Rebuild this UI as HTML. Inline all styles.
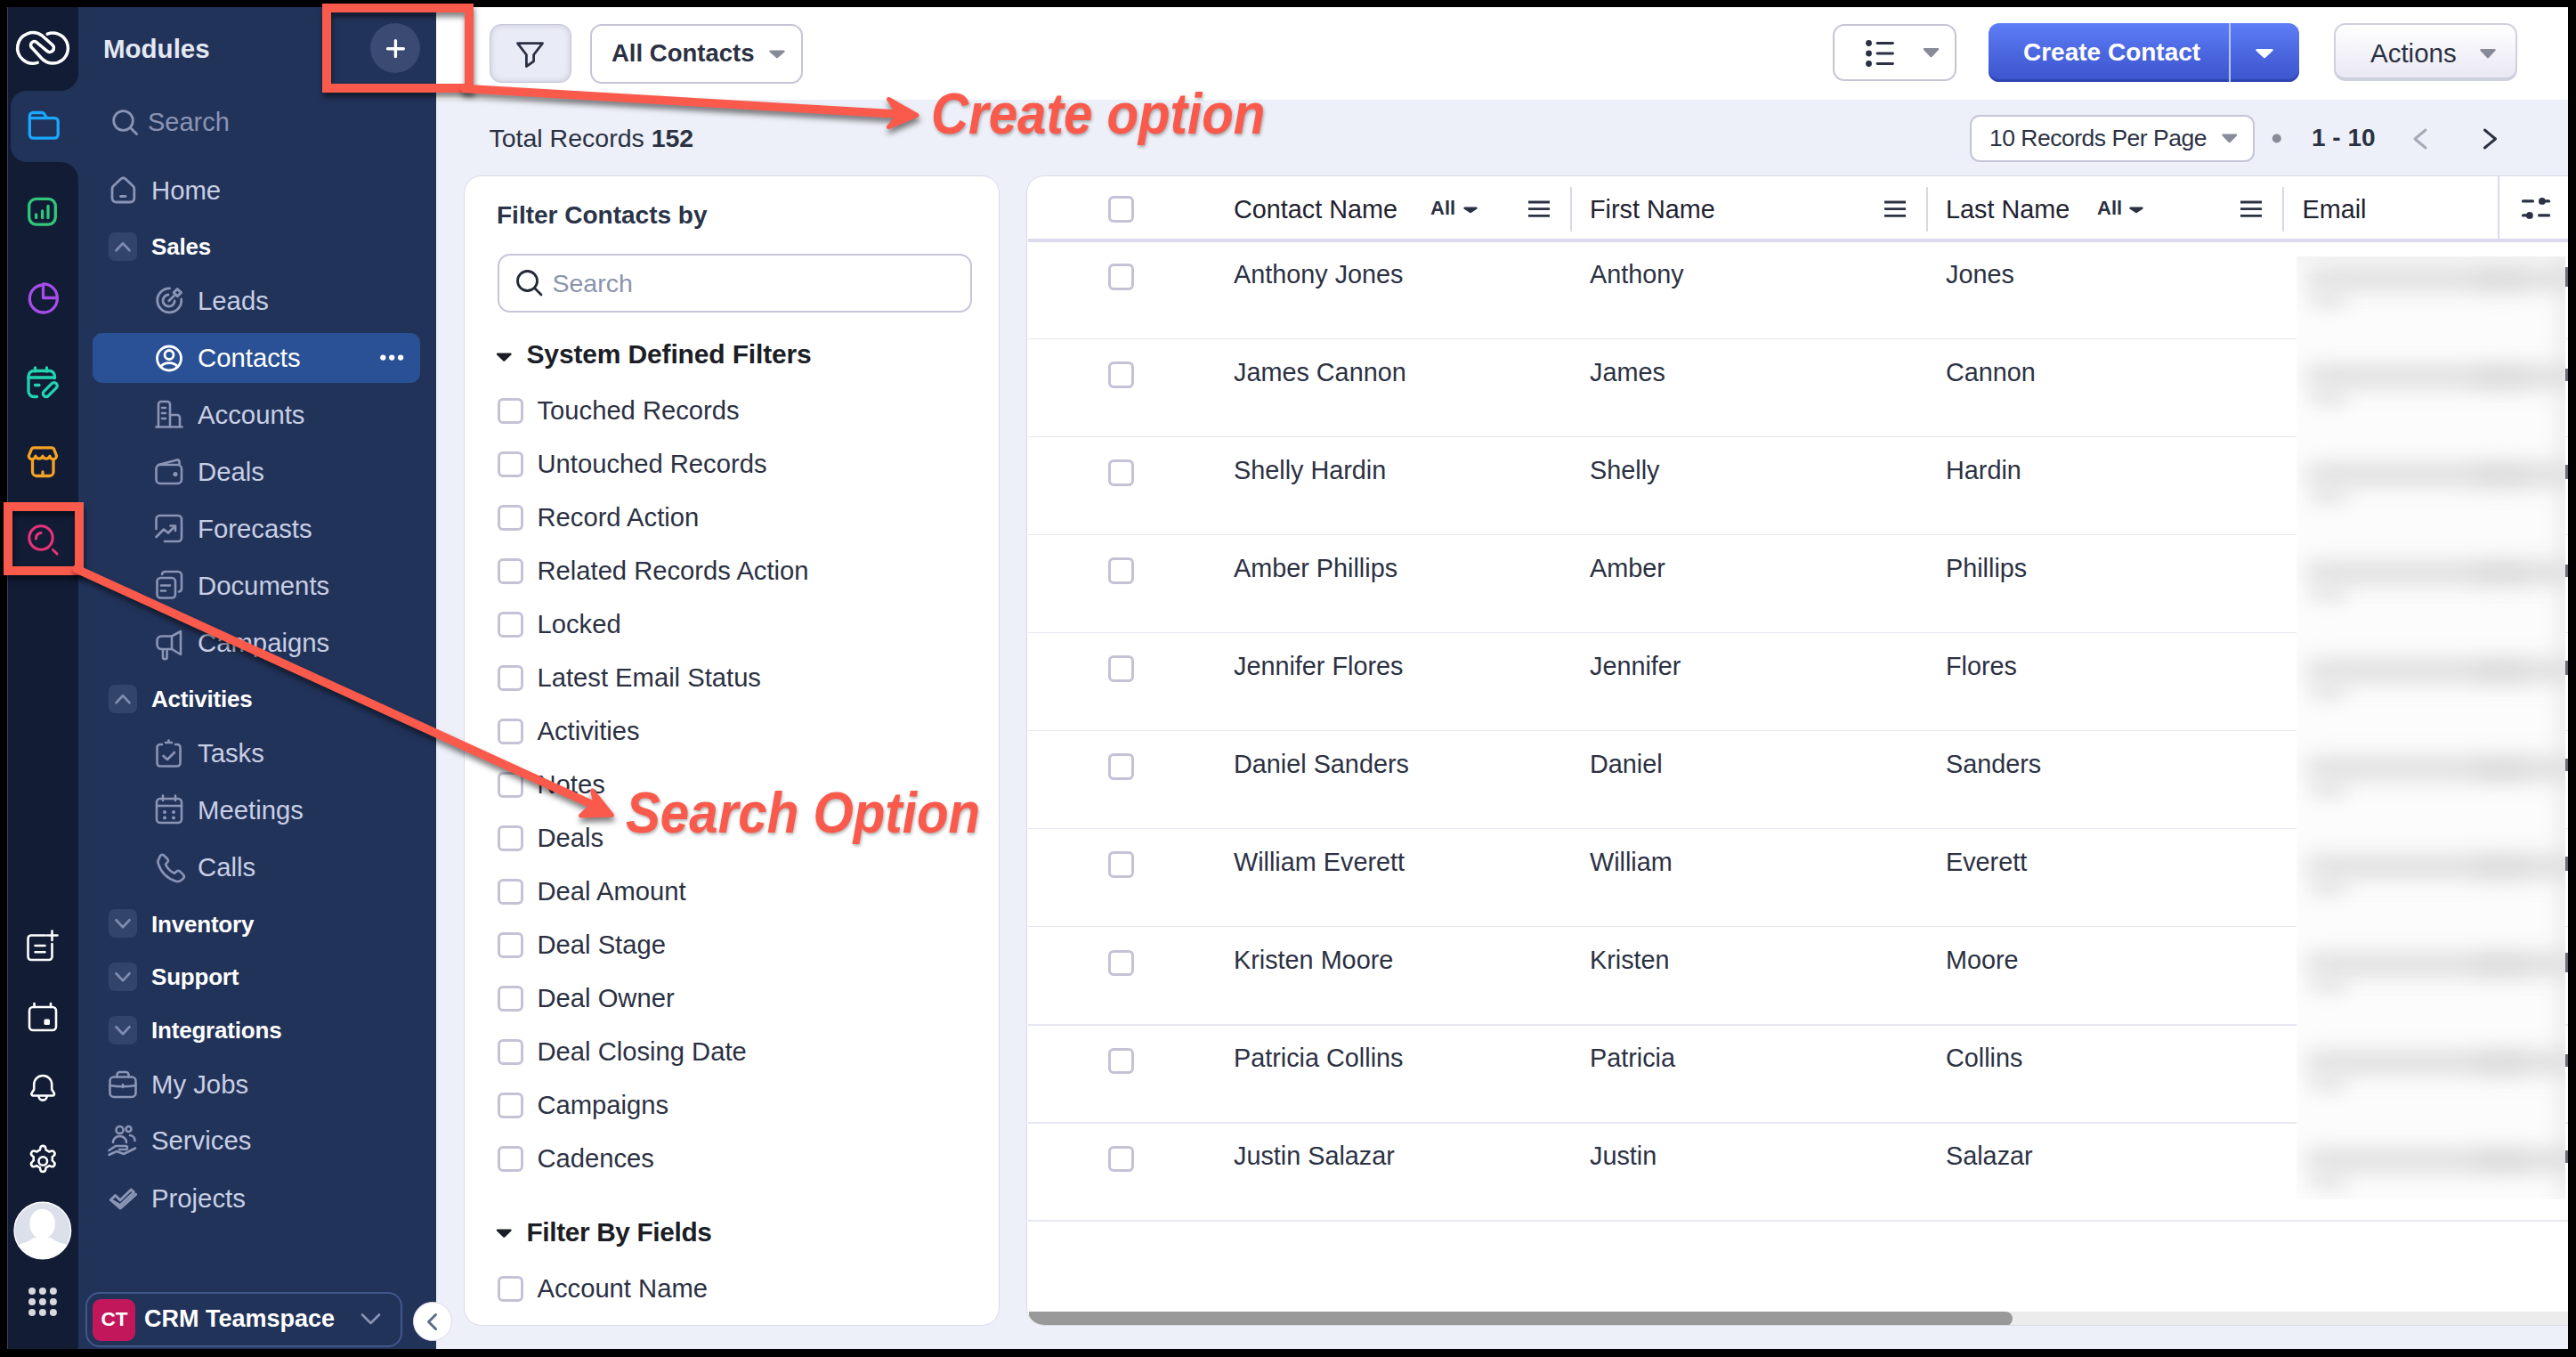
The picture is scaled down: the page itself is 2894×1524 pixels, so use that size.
<!DOCTYPE html>
<html><head><meta charset="utf-8"><style>
html,body{margin:0;padding:0;}
body{width:2894px;height:1524px;position:relative;overflow:hidden;background:#000;font-family:"Liberation Sans", sans-serif;-webkit-font-smoothing:antialiased;}
svg{display:block}
</style></head><body>
<div style="position:absolute;left:0px;top:0px;width:2894px;height:1524px;background:#000"></div>
<div style="position:absolute;left:490px;top:8px;width:2395px;height:1507px;background:#edf0f8"></div>
<div style="position:absolute;left:490px;top:8px;width:2395px;height:104px;background:#ffffff"></div>
<div style="position:absolute;left:8px;top:8px;width:1px;height:1507px;background:#3b4256"></div>
<div style="position:absolute;left:9px;top:8px;width:79px;height:1507px;background:#22335a"></div>
<div style="position:absolute;left:9px;top:8px;width:79px;height:94px;background:#121c35;border-bottom-right-radius:20px"></div>
<div style="position:absolute;left:9px;top:182px;width:79px;height:1333px;background:#121c35;border-top-right-radius:20px"></div>
<div style="position:absolute;left:9px;top:90px;width:30px;height:104px;background:#121c35"></div>
<div style="position:absolute;left:12px;top:102px;width:80px;height:80px;background:#22335a;border-radius:18px 0 0 18px"></div>
<div style="position:absolute;left:88px;top:8px;width:402px;height:1507px;background:#22335a"></div>
<svg style="position:absolute;left:0px;top:0px;overflow:visible;pointer-events:none;" width="2894" height="1524" viewBox="0 0 2894 1524"><path d="M42.2 70.4 A17.3 17.3 0 1 1 47.5 40.2 L59 50.5 A4.6 4.6 0 0 1 53.5 57.8 L40.5 47 A4.1 4.1 0 0 0 36 53.8 L47 65.7 A17 17 0 1 0 53.2 38.2" fill="none" stroke="#fff" stroke-width="3.5" stroke-linecap="round" stroke-linejoin="round"/><g fill="none" stroke="#1aa7ff" stroke-width="3.3" stroke-linecap="round" stroke-linejoin="round"><path d="M33.3 130.2 a3.7 3.7 0 0 1 3.7 -3.7 H47.3 a2.6 2.6 0 0 1 2.1 1.1 L52.8 132.6 H61.3 a3.9 3.9 0 0 1 3.9 3.9 V151.3 a3.9 3.9 0 0 1 -3.9 3.9 H37.2 a3.9 3.9 0 0 1 -3.9 -3.9 Z"/><path d="M34 132.6 H52"/></g><g fill="none" stroke="#30c77a" stroke-width="3.3" stroke-linecap="round"><rect x="32.7" y="223.3" width="29.6" height="28.8" rx="8"/><path d="M40.6 244.5 V241 M47.6 244.5 V237 M54 244.5 V231.5"/></g><g fill="none" stroke="#a64de9" stroke-width="3.3" stroke-linecap="round" stroke-linejoin="round"><path d="M64.3 336 A15.5 15.5 0 1 1 48 320"/><path d="M48.5 318.8 V334.5 H64.3 A15.7 15.7 0 0 0 48.5 318.8 Z"/></g><g fill="none" stroke="#22d3b0" stroke-width="3.3" stroke-linecap="round" stroke-linejoin="round"><path d="M41.5 445.5 H38 a6 6 0 0 1 -6 -6 V422.5 a6 6 0 0 1 6 -6 H55.5 a6 6 0 0 1 6 6 V424.5"/><path d="M32 424 H61.5 M39.5 413 V417 M52.5 413 V417 M39.5 432.5 H44"/><rect x="-9.8" y="-3.5" width="19.6" height="7" rx="3.5" transform="translate(56.3 437.6) rotate(-45)"/></g><g fill="none" stroke="#f6a224" stroke-width="3.3" stroke-linecap="round" stroke-linejoin="round"><path d="M38 502.8 H58 a3 3 0 0 1 2.8 2 L63.5 512 a3.6 3.6 0 0 1 -3.6 3.6 a4 4 0 0 1 -4 -3.3 a4.2 4.2 0 0 1 -8 0 a4.2 4.2 0 0 1 -8 0 a4 4 0 0 1 -4 3.3 a3.6 3.6 0 0 1 -3.6 -3.6 L35.2 504.8 a3 3 0 0 1 2.8 -2 Z"/><path d="M36.5 516.5 V530 a4.5 4.5 0 0 0 4.5 4.5 H55.5 a4.5 4.5 0 0 0 4.5 -4.5 V516.5"/><path d="M48 534 V530"/></g><g fill="none" stroke="#e8327a" stroke-width="3.1" stroke-linecap="round"><circle cx="46" cy="604" r="13.2"/><path d="M40.5 605 A6 6 0 0 1 46 598.5"/><path d="M59.5 617.5 L64 622"/></g><g fill="none" stroke="#ffffff" stroke-width="2.6" stroke-linecap="round" stroke-linejoin="round"><path d="M51 1050.5 H35 a3.5 3.5 0 0 0 -3.5 3.5 V1074.5 a3.5 3.5 0 0 0 3.5 3.5 H55 a3.5 3.5 0 0 0 3.5 -3.5 V1060"/><path d="M39.5 1062 H50.5 M39.5 1069.3 H50.5 M58.5 1045.5 V1056 M53 1050.5 H64.5"/></g><g fill="none" stroke="#ffffff" stroke-width="2.6" stroke-linecap="round" stroke-linejoin="round"><rect x="33" y="1131" width="30" height="26" rx="4"/><path d="M38.5 1127 V1131 M57 1127 V1131"/></g><rect x="49.5" y="1144.5" width="6.5" height="6.5" rx="1.5" fill="#fff"/><g fill="none" stroke="#ffffff" stroke-width="2.6" stroke-linecap="round" stroke-linejoin="round"><path d="M36.9 1230.5 H59.5 a2 2 0 0 0 1 -3.3 L58.2 1223.5 V1218 a10 10 0 0 0 -20 0 V1223.5 L35.9 1227.2 a2 2 0 0 0 1 3.3 Z"/><path d="M43.5 1231 a4.6 4.6 0 0 0 9.2 0"/></g><g fill="none" stroke="#ffffff" stroke-width="2.6" stroke-linecap="round" stroke-linejoin="round"><path d="M45.3 1289.3 a3 3 0 0 1 5.9 0 l0.5 2.2 a12 12 0 0 1 3.5 2 l2.2 -0.7 a3 3 0 0 1 3 5.1 l-1.7 1.5 a12 12 0 0 1 0 4 l1.7 1.5 a3 3 0 0 1 -3 5.1 l-2.2 -0.7 a12 12 0 0 1 -3.5 2 l-0.5 2.2 a3 3 0 0 1 -5.9 0 l-0.5 -2.2 a12 12 0 0 1 -3.5 -2 l-2.2 0.7 a3 3 0 0 1 -3 -5.1 l1.7 -1.5 a12 12 0 0 1 0 -4 l-1.7 -1.5 a3 3 0 0 1 3 -5.1 l2.2 0.7 a12 12 0 0 1 3.5 -2 Z"/><circle cx="48.25" cy="1304" r="4.8"/></g><defs><clipPath id="avc"><circle cx="47.8" cy="1382" r="31.5"/></clipPath></defs><circle cx="47.8" cy="1382" r="31.8" fill="#dce0ea" stroke="#ffffff" stroke-width="1.4"/><g clip-path="url(#avc)" fill="#fff"><ellipse cx="47.6" cy="1374.5" rx="14.3" ry="16.8"/><path d="M14 1401 C22 1396 32 1396 38 1390 L57 1390 C63 1396 73 1396 82 1401 V1420 H14 Z"/></g><circle cx="36" cy="1450" r="4" fill="#d6d8de"/><circle cx="47.9" cy="1450" r="4" fill="#d6d8de"/><circle cx="59.9" cy="1450" r="4" fill="#d6d8de"/><circle cx="36" cy="1461.9" r="4" fill="#d6d8de"/><circle cx="47.9" cy="1461.9" r="4" fill="#d6d8de"/><circle cx="59.9" cy="1461.9" r="4" fill="#d6d8de"/><circle cx="36" cy="1473.9" r="4" fill="#d6d8de"/><circle cx="47.9" cy="1473.9" r="4" fill="#d6d8de"/><circle cx="59.9" cy="1473.9" r="4" fill="#d6d8de"/></svg>
<div style="position:absolute;left:116px;top:39.83px;font-size:29.5px;line-height:29.5px;font-weight:700;color:#e4e8f3;white-space:nowrap;">Modules</div>
<div style="position:absolute;left:416px;top:26px;width:56px;height:56px;background:#3a4a72;border-radius:50%"></div>
<svg style="position:absolute;left:0px;top:0px;overflow:visible;pointer-events:none;" width="2894" height="1524" viewBox="0 0 2894 1524"><path d="M444.4 45.8 V63.6 M435.5 54.7 H453.3" stroke="#fff" stroke-width="3.4" stroke-linecap="round"/></svg>
<svg style="position:absolute;left:0px;top:0px;overflow:visible;pointer-events:none;" width="2894" height="1524" viewBox="0 0 2894 1524"><g fill="none" stroke="#8a95b5" stroke-width="2.8" stroke-linecap="round"><circle cx="138.5" cy="135.5" r="10.8"/><path d="M146.5 143.5 L153.5 150.5"/></g></svg>
<div style="position:absolute;left:166px;top:122.95px;font-size:29px;line-height:29px;font-weight:400;color:#8a94b4;white-space:nowrap;">Search</div>
<svg style="position:absolute;left:0px;top:0px;overflow:visible;pointer-events:none;" width="2894" height="1524" viewBox="0 0 2894 1524"><g fill="none" stroke="#8a95b5" stroke-width="2.8" stroke-linecap="round" stroke-linejoin="round"><path d="M126 212 a4 4 0 0 1 1.3 -3 L136 200.8 a3.5 3.5 0 0 1 4.8 0 L149.5 209 a4 4 0 0 1 1.3 3 V222.5 a4.5 4.5 0 0 1 -4.5 4.5 H130.5 a4.5 4.5 0 0 1 -4.5 -4.5 Z"/><path d="M135.5 220.5 H141"/></g></svg>
<div style="position:absolute;left:170px;top:199.20px;font-size:29.3px;line-height:29.3px;font-weight:400;color:#c8cfe4;white-space:nowrap;">Home</div>
<div style="position:absolute;left:122px;top:261px;width:32px;height:31.5px;background:#33446b;border-radius:7px"></div>
<svg style="position:absolute;left:0px;top:0px;overflow:visible;pointer-events:none;" width="2894" height="1524" viewBox="0 0 2894 1524"><path d="M130.5 281.25 L138 273.25 L145.5 281.25" fill="none" stroke="#7f8cae" stroke-width="2.6" stroke-linecap="round" stroke-linejoin="round"/></svg>
<div style="position:absolute;left:170px;top:263.99px;font-size:26px;line-height:26px;font-weight:700;color:#ffffff;white-space:nowrap;letter-spacing:-0.2px;">Sales</div>
<svg style="position:absolute;left:0px;top:0px;overflow:visible;pointer-events:none;" width="2894" height="1524" viewBox="0 0 2894 1524"><g fill="none" stroke="#8a95b5" stroke-width="2.8" stroke-linecap="round" stroke-linejoin="round"><path d="M203.7 336 A13.5 13.5 0 1 1 190.6 323.9"/><path d="M196.2 338 A6.6 6.6 0 1 1 189 331"/><path d="M189.8 337.8 L195.5 332.3"/><path d="M195.2 328.6 L199.3 324.5 L203.4 328.6 L199.3 332.7 Z" stroke-width="3"/></g></svg>
<div style="position:absolute;left:222px;top:323.20px;font-size:29.3px;line-height:29.3px;font-weight:400;color:#c8cfe4;white-space:nowrap;">Leads</div>
<div style="position:absolute;left:104px;top:374px;width:368px;height:56px;background:#2a5196;border-radius:11px"></div>
<svg style="position:absolute;left:0px;top:0px;overflow:visible;pointer-events:none;" width="2894" height="1524" viewBox="0 0 2894 1524"><g fill="none" stroke="#fff" stroke-width="2.8" stroke-linecap="round"><circle cx="190" cy="402.5" r="13.5"/><circle cx="190" cy="398.5" r="5"/><path d="M180.5 412 a10.5 7.5 0 0 1 19 0"/></g></svg>
<div style="position:absolute;left:222px;top:387.20px;font-size:29.3px;line-height:29.3px;font-weight:400;color:#ffffff;white-space:nowrap;">Contacts</div>
<svg style="position:absolute;left:0px;top:0px;overflow:visible;pointer-events:none;" width="2894" height="1524" viewBox="0 0 2894 1524"><g fill="#fff"><circle cx="430.3" cy="401.6" r="3.15"/><circle cx="440.2" cy="401.6" r="3.15"/><circle cx="450.1" cy="401.6" r="3.15"/></g></svg>
<svg style="position:absolute;left:0px;top:0px;overflow:visible;pointer-events:none;" width="2894" height="1524" viewBox="0 0 2894 1524"><g fill="none" stroke="#8a95b5" stroke-width="2.6" stroke-linecap="round" stroke-linejoin="round"><path d="M175.5 479.5 H204.5"/><path d="M178 479 V454 a3 3 0 0 1 3 -3 H188 a3 3 0 0 1 3 3 V479"/><path d="M191 466 H199 a3 3 0 0 1 3 3 V479"/><path d="M182 458 H186 M182 464 H186 M182 470 H186"/></g></svg>
<div style="position:absolute;left:222px;top:451.20px;font-size:29.3px;line-height:29.3px;font-weight:400;color:#c8cfe4;white-space:nowrap;">Accounts</div>
<svg style="position:absolute;left:0px;top:0px;overflow:visible;pointer-events:none;" width="2894" height="1524" viewBox="0 0 2894 1524"><g fill="none" stroke="#8a95b5" stroke-width="2.6" stroke-linecap="round" stroke-linejoin="round"><rect x="175.5" y="522" width="28.5" height="21" rx="4.5"/><path d="M178 522 L199 516.5 a2 2 0 0 1 2.5 2 V522"/><circle cx="197" cy="532.5" r="1.3" fill="#8a95b5"/></g></svg>
<div style="position:absolute;left:222px;top:515.20px;font-size:29.3px;line-height:29.3px;font-weight:400;color:#c8cfe4;white-space:nowrap;">Deals</div>
<svg style="position:absolute;left:0px;top:0px;overflow:visible;pointer-events:none;" width="2894" height="1524" viewBox="0 0 2894 1524"><g fill="none" stroke="#8a95b5" stroke-width="2.6" stroke-linecap="round" stroke-linejoin="round"><path d="M175.5 594 V583 a4 4 0 0 1 4 -4 H200 a4 4 0 0 1 4 4 V604 a4 4 0 0 1 -4 4 H185"/><path d="M175.5 603 L184 594.5 L189 598.5 L196.5 591 M191.5 590.5 H197 V596"/></g></svg>
<div style="position:absolute;left:222px;top:579.20px;font-size:29.3px;line-height:29.3px;font-weight:400;color:#c8cfe4;white-space:nowrap;">Forecasts</div>
<svg style="position:absolute;left:0px;top:0px;overflow:visible;pointer-events:none;" width="2894" height="1524" viewBox="0 0 2894 1524"><g fill="none" stroke="#8a95b5" stroke-width="2.6" stroke-linecap="round" stroke-linejoin="round"><rect x="176.5" y="649" width="20.5" height="22.5" rx="4"/><path d="M182 645 a3.5 3.5 0 0 1 3.5 -3 H200 a4 4 0 0 1 4 4 V661 a3.5 3.5 0 0 1 -3 3.5"/><path d="M181 657.5 H191 M181 663.5 H186"/></g></svg>
<div style="position:absolute;left:222px;top:643.20px;font-size:29.3px;line-height:29.3px;font-weight:400;color:#c8cfe4;white-space:nowrap;">Documents</div>
<svg style="position:absolute;left:0px;top:0px;overflow:visible;pointer-events:none;" width="2894" height="1524" viewBox="0 0 2894 1524"><g fill="none" stroke="#8a95b5" stroke-width="2.6" stroke-linecap="round" stroke-linejoin="round"><path d="M203 709 V735 L193 729 H181.5 a5 5 0 0 1 -5 -5 V719.5 a5 5 0 0 1 5 -5 H193 Z"/><path d="M183 729.5 V738 a2.3 2.3 0 0 0 4.6 0 V729.5 M193 714.5 V729"/></g></svg>
<div style="position:absolute;left:222px;top:707.20px;font-size:29.3px;line-height:29.3px;font-weight:400;color:#c8cfe4;white-space:nowrap;">Campaigns</div>
<div style="position:absolute;left:122px;top:769px;width:32px;height:31.5px;background:#33446b;border-radius:7px"></div>
<svg style="position:absolute;left:0px;top:0px;overflow:visible;pointer-events:none;" width="2894" height="1524" viewBox="0 0 2894 1524"><path d="M130.5 789.25 L138 781.25 L145.5 789.25" fill="none" stroke="#7f8cae" stroke-width="2.6" stroke-linecap="round" stroke-linejoin="round"/></svg>
<div style="position:absolute;left:170px;top:771.99px;font-size:26px;line-height:26px;font-weight:700;color:#ffffff;white-space:nowrap;letter-spacing:-0.2px;">Activities</div>
<svg style="position:absolute;left:0px;top:0px;overflow:visible;pointer-events:none;" width="2894" height="1524" viewBox="0 0 2894 1524"><g fill="none" stroke="#8a95b5" stroke-width="2.6" stroke-linecap="round" stroke-linejoin="round"><path d="M182 836 H180 a3.5 3.5 0 0 0 -3.5 3.5 V857 a3.5 3.5 0 0 0 3.5 3.5 H199 a3.5 3.5 0 0 0 3.5 -3.5 V839.5 a3.5 3.5 0 0 0 -3.5 -3.5 H197"/><path d="M186 834 H193 M189.5 831.5 V834"/><path d="M183.5 849 L188 853 L196 845"/></g></svg>
<div style="position:absolute;left:222px;top:831.20px;font-size:29.3px;line-height:29.3px;font-weight:400;color:#c8cfe4;white-space:nowrap;">Tasks</div>
<svg style="position:absolute;left:0px;top:0px;overflow:visible;pointer-events:none;" width="2894" height="1524" viewBox="0 0 2894 1524"><g fill="none" stroke="#8a95b5" stroke-width="2.6" stroke-linecap="round" stroke-linejoin="round"><rect x="176" y="897" width="28" height="27" rx="4"/><path d="M176 905 H204 M183 893.5 V899 M197 893.5 V899"/></g><g fill="#8a95b5"><circle cx="185" cy="912" r="2"/><circle cx="195" cy="912" r="2"/><circle cx="185" cy="918.5" r="2"/><circle cx="195" cy="918.5" r="2"/></g></svg>
<div style="position:absolute;left:222px;top:895.20px;font-size:29.3px;line-height:29.3px;font-weight:400;color:#c8cfe4;white-space:nowrap;">Meetings</div>
<svg style="position:absolute;left:0px;top:0px;overflow:visible;pointer-events:none;" width="2894" height="1524" viewBox="0 0 2894 1524"><path d="M180 961 a3 3 0 0 1 4 -0.5 l4 4 a3 3 0 0 1 0 4 l-2 2.2 a20 20 0 0 0 10 10 l2.2 -2 a3 3 0 0 1 4 0 l4 4 a3 3 0 0 1 -0.5 4 l-2.5 2 a6 6 0 0 1 -5.5 1 a30 30 0 0 1 -20 -20 a6 6 0 0 1 1 -5.5 Z" fill="none" stroke="#8a95b5" stroke-width="2.6" stroke-linejoin="round"/></svg>
<div style="position:absolute;left:222px;top:959.20px;font-size:29.3px;line-height:29.3px;font-weight:400;color:#c8cfe4;white-space:nowrap;">Calls</div>
<div style="position:absolute;left:122px;top:1021px;width:32px;height:31.5px;background:#33446b;border-radius:7px"></div>
<svg style="position:absolute;left:0px;top:0px;overflow:visible;pointer-events:none;" width="2894" height="1524" viewBox="0 0 2894 1524"><path d="M130.5 1033.25 L138 1041.25 L145.5 1033.25" fill="none" stroke="#7f8cae" stroke-width="2.6" stroke-linecap="round" stroke-linejoin="round"/></svg>
<div style="position:absolute;left:170px;top:1024.59px;font-size:26px;line-height:26px;font-weight:700;color:#ffffff;white-space:nowrap;letter-spacing:-0.2px;">Inventory</div>
<div style="position:absolute;left:122px;top:1081px;width:32px;height:31.5px;background:#33446b;border-radius:7px"></div>
<svg style="position:absolute;left:0px;top:0px;overflow:visible;pointer-events:none;" width="2894" height="1524" viewBox="0 0 2894 1524"><path d="M130.5 1093.25 L138 1101.25 L145.5 1093.25" fill="none" stroke="#7f8cae" stroke-width="2.6" stroke-linecap="round" stroke-linejoin="round"/></svg>
<div style="position:absolute;left:170px;top:1083.59px;font-size:26px;line-height:26px;font-weight:700;color:#ffffff;white-space:nowrap;letter-spacing:-0.2px;">Support</div>
<div style="position:absolute;left:122px;top:1141px;width:32px;height:31.5px;background:#33446b;border-radius:7px"></div>
<svg style="position:absolute;left:0px;top:0px;overflow:visible;pointer-events:none;" width="2894" height="1524" viewBox="0 0 2894 1524"><path d="M130.5 1153.25 L138 1161.25 L145.5 1153.25" fill="none" stroke="#7f8cae" stroke-width="2.6" stroke-linecap="round" stroke-linejoin="round"/></svg>
<div style="position:absolute;left:170px;top:1143.99px;font-size:26px;line-height:26px;font-weight:700;color:#ffffff;white-space:nowrap;letter-spacing:-0.2px;">Integrations</div>
<svg style="position:absolute;left:0px;top:0px;overflow:visible;pointer-events:none;" width="2894" height="1524" viewBox="0 0 2894 1524"><g fill="none" stroke="#8a95b5" stroke-width="2.6" stroke-linecap="round" stroke-linejoin="round"><rect x="123.5" y="1209.5" width="29" height="22.5" rx="4.5"/><path d="M131.5 1209.5 V1207 a3 3 0 0 1 3 -3 H141.5 a3 3 0 0 1 3 3 V1209.5 M123.5 1219 a40 18 0 0 0 29 0 M138 1218 V1221"/></g></svg>
<div style="position:absolute;left:170px;top:1203.20px;font-size:29.3px;line-height:29.3px;font-weight:400;color:#c8cfe4;white-space:nowrap;">My Jobs</div>
<svg style="position:absolute;left:0px;top:0px;overflow:visible;pointer-events:none;" width="2894" height="1524" viewBox="0 0 2894 1524"><g fill="none" stroke="#8a95b5" stroke-width="2.6" stroke-linecap="round" stroke-linejoin="round"><circle cx="134.5" cy="1269" r="4"/><path d="M127 1283 a7.5 7 0 0 1 15 0"/><circle cx="144.5" cy="1268" r="3"/><path d="M146 1275 a6 6 0 0 1 5.5 6"/><path d="M122.5 1292 L130 1287 H141 a2 2 0 0 1 0 4 H134 M122.5 1297 L131 1293 L139 1296 L152 1289.5"/></g></svg>
<div style="position:absolute;left:170px;top:1266.20px;font-size:29.3px;line-height:29.3px;font-weight:400;color:#c8cfe4;white-space:nowrap;">Services</div>
<svg style="position:absolute;left:0px;top:0px;overflow:visible;pointer-events:none;" width="2894" height="1524" viewBox="0 0 2894 1524"><g fill="none" stroke="#8a95b5" stroke-width="3" stroke-linecap="round" stroke-linejoin="round"><path d="M124.5 1347.5 L129.5 1342.5 L135 1347.8 L147.3 1336 L150.4 1339.1 L135 1353.6 Z"/><path d="M124.5 1347.5 L135.3 1357 L152.6 1341.3"/></g></svg>
<div style="position:absolute;left:170px;top:1330.80px;font-size:29.3px;line-height:29.3px;font-weight:400;color:#c8cfe4;white-space:nowrap;">Projects</div>
<div style="position:absolute;left:96px;top:1450.5px;width:355.5px;height:62.5px;box-sizing:border-box;border:2px solid #41588d;border-radius:16px"></div>
<div style="position:absolute;left:104px;top:1458.5px;width:48px;height:47px;background:#c2185b;border-radius:9px"></div>
<div style="position:absolute;left:113.5px;top:1470.95px;font-size:22.5px;line-height:22.5px;font-weight:700;color:#ffffff;white-space:nowrap;">CT</div>
<div style="position:absolute;left:162px;top:1468.14px;font-size:27px;line-height:27px;font-weight:700;color:#ffffff;white-space:nowrap;">CRM Teamspace</div>
<svg style="position:absolute;left:0px;top:0px;overflow:visible;pointer-events:none;" width="2894" height="1524" viewBox="0 0 2894 1524"><path d="M407 1476.5 L416.5 1486 L426 1476.5" fill="none" stroke="#8a95b5" stroke-width="2.6" stroke-linecap="round" stroke-linejoin="round"/></svg>
<div style="position:absolute;left:464px;top:1462px;width:43.5px;height:43.5px;box-sizing:border-box;background:#fff;border:1.6px solid #dcd8ec;border-radius:50%"></div>
<svg style="position:absolute;left:0px;top:0px;overflow:visible;pointer-events:none;" width="2894" height="1524" viewBox="0 0 2894 1524"><path d="M489.5 1476.5 L481.5 1484.5 L489.5 1492.5" fill="none" stroke="#5d6a8b" stroke-width="3" stroke-linecap="round" stroke-linejoin="round"/></svg>
<div style="position:absolute;left:550px;top:27px;width:91.5px;height:65.5px;box-sizing:border-box;background:#e9ebf6;border:1.6px solid #c6c6d8;border-radius:13px;box-shadow:inset 0 0 6px rgba(120,120,150,0.35)"></div>
<svg style="position:absolute;left:0px;top:0px;overflow:visible;pointer-events:none;" width="2894" height="1524" viewBox="0 0 2894 1524"><path d="M581.5 48.6 H609.5 L599.6 61.5 V68.8 L591.4 74.5 V61.5 Z" fill="none" stroke="#2b3142" stroke-width="2.8" stroke-linejoin="round"/></svg>
<div style="position:absolute;left:662.5px;top:26.5px;width:239px;height:67px;box-sizing:border-box;background:#fff;border:2px solid #c6c5d8;border-radius:13px"></div>
<div style="position:absolute;left:687px;top:46.12px;font-size:27.5px;line-height:27.5px;font-weight:700;color:#2b3142;white-space:nowrap;">All Contacts</div>
<svg style="position:absolute;left:0px;top:0px;overflow:visible;pointer-events:none;" width="2894" height="1524" viewBox="0 0 2894 1524"><path d="M865.50 57.70 L880.50 57.70 L873.00 64.10 Z" fill="#878b98" stroke="#878b98" stroke-width="2.4" stroke-linejoin="round"/></svg>
<div style="position:absolute;left:2059px;top:26.5px;width:138.5px;height:64.5px;box-sizing:border-box;background:#fff;border:2px solid #c6c5d8;border-radius:13px"></div>
<svg style="position:absolute;left:0px;top:0px;overflow:visible;pointer-events:none;" width="2894" height="1524" viewBox="0 0 2894 1524"><g fill="#2b3142"><circle cx="2099.5" cy="48.5" r="3.4"/><circle cx="2099.5" cy="60" r="3.4"/><circle cx="2099.5" cy="71.5" r="3.4"/></g><path d="M2109 48.5 H2126.5 M2109 60 H2126.5 M2109 71.5 H2126.5" stroke="#2b3142" stroke-width="2.8" stroke-linecap="round"/></svg>
<svg style="position:absolute;left:0px;top:0px;overflow:visible;pointer-events:none;" width="2894" height="1524" viewBox="0 0 2894 1524"><path d="M2162.00 55.20 L2177.00 55.20 L2169.50 63.10 Z" fill="#878b98" stroke="#878b98" stroke-width="2.4" stroke-linejoin="round"/></svg>
<div style="position:absolute;left:2234px;top:26px;width:348.5px;height:66px;background:linear-gradient(#5d7ef7,#4863dc 60%,#3d55cc);border-radius:12px;box-shadow:inset 0 -3px 0 #2f45b3"></div>
<div style="position:absolute;left:2503.5px;top:26px;width:2px;height:66px;background:#b9c6f8"></div>
<div style="position:absolute;left:2273px;top:45.30px;font-size:28px;line-height:28px;font-weight:700;color:#ffffff;white-space:nowrap;">Create Contact</div>
<svg style="position:absolute;left:0px;top:0px;overflow:visible;pointer-events:none;" width="2894" height="1524" viewBox="0 0 2894 1524"><path d="M2535.50 56.20 L2552.50 56.20 L2544.00 64.10 Z" fill="#ffffff" stroke="#ffffff" stroke-width="2.4" stroke-linejoin="round"/></svg>
<div style="position:absolute;left:2621.5px;top:25.5px;width:206px;height:65.5px;box-sizing:border-box;background:linear-gradient(#ffffff,#eae8f4);border:2px solid #cfd0de;border-bottom:4px solid #cdd1de;border-radius:13px"></div>
<div style="position:absolute;left:2663px;top:44.63px;font-size:29.5px;line-height:29.5px;font-weight:400;color:#2b3142;white-space:nowrap;">Actions</div>
<svg style="position:absolute;left:0px;top:0px;overflow:visible;pointer-events:none;" width="2894" height="1524" viewBox="0 0 2894 1524"><path d="M2787.50 56.20 L2802.50 56.20 L2795.00 64.10 Z" fill="#878b98" stroke="#878b98" stroke-width="2.4" stroke-linejoin="round"/></svg>
<div style="position:absolute;left:549.5px;top:140.87px;font-size:28.5px;line-height:28.5px;font-weight:400;color:#2b3142;white-space:nowrap;">Total Records <b>152</b></div>
<div style="position:absolute;left:2212.5px;top:128.5px;width:320px;height:53px;box-sizing:border-box;background:#fff;border:2px solid #c6c5d8;border-radius:11px"></div>
<div style="position:absolute;left:2235px;top:141.57px;font-size:26.5px;line-height:26.5px;font-weight:400;color:#2b3142;white-space:nowrap;letter-spacing:-0.5px;">10 Records Per Page</div>
<svg style="position:absolute;left:0px;top:0px;overflow:visible;pointer-events:none;" width="2894" height="1524" viewBox="0 0 2894 1524"><path d="M2497.50 151.70 L2512.00 151.70 L2504.75 159.10 Z" fill="#878b98" stroke="#878b98" stroke-width="2.4" stroke-linejoin="round"/></svg>
<svg style="position:absolute;left:0px;top:0px;overflow:visible;pointer-events:none;" width="2894" height="1524" viewBox="0 0 2894 1524"><circle cx="2557.8" cy="155.5" r="5" fill="#878b98"/></svg>
<div style="position:absolute;left:2597px;top:141.10px;font-size:28px;line-height:28px;font-weight:700;color:#2b3142;white-space:nowrap;">1 - 10</div>
<svg style="position:absolute;left:0px;top:0px;overflow:visible;pointer-events:none;" width="2894" height="1524" viewBox="0 0 2894 1524"><path d="M2725 146 L2713 156 L2725 166" fill="none" stroke="#a6aab8" stroke-width="3" stroke-linecap="round" stroke-linejoin="round"/><path d="M2791.5 146 L2803.5 156 L2791.5 166" fill="none" stroke="#2b3142" stroke-width="3" stroke-linecap="round" stroke-linejoin="round"/></svg>
<div style="position:absolute;left:521px;top:197px;width:602px;height:1292px;box-sizing:border-box;background:#fff;border:1.6px solid #dcd9ec;border-radius:20px"></div>
<div style="position:absolute;left:558px;top:228.30px;font-size:28px;line-height:28px;font-weight:700;color:#2a3347;white-space:nowrap;">Filter Contacts by</div>
<div style="position:absolute;left:558.5px;top:284.5px;width:533px;height:66.5px;box-sizing:border-box;background:#fff;border:2px solid #c7c5d8;border-radius:14px"></div>
<svg style="position:absolute;left:0px;top:0px;overflow:visible;pointer-events:none;" width="2894" height="1524" viewBox="0 0 2894 1524"><g fill="none" stroke="#232838" stroke-width="2.8" stroke-linecap="round"><circle cx="592.5" cy="315.5" r="11"/><path d="M600.5 323.5 L608 331"/></g></svg>
<div style="position:absolute;left:620.5px;top:304.07px;font-size:28.5px;line-height:28.5px;font-weight:400;color:#8b93ad;white-space:nowrap;">Search</div>
<svg style="position:absolute;left:0px;top:0px;overflow:visible;pointer-events:none;" width="2894" height="1524" viewBox="0 0 2894 1524"><path d="M559.00 397.70 L573.50 397.70 L566.25 404.60 Z" fill="#1c1e26" stroke="#1c1e26" stroke-width="2.4" stroke-linejoin="round"/></svg>
<div style="position:absolute;left:591.5px;top:382.91px;font-size:30px;line-height:30px;font-weight:700;color:#1c1e26;white-space:nowrap;letter-spacing:-0.15px;">System Defined Filters</div>
<div style="position:absolute;left:558.5px;top:446.5px;width:29.5px;height:29.5px;box-sizing:border-box;border:3px solid #c4c2d5;border-radius:6px;background:#fff"></div>
<div style="position:absolute;left:603.5px;top:446.58px;font-size:29.2px;line-height:29.2px;font-weight:400;color:#2b3142;white-space:nowrap;">Touched Records</div>
<div style="position:absolute;left:558.5px;top:506.52000000000004px;width:29.5px;height:29.5px;box-sizing:border-box;border:3px solid #c4c2d5;border-radius:6px;background:#fff"></div>
<div style="position:absolute;left:603.5px;top:506.60px;font-size:29.2px;line-height:29.2px;font-weight:400;color:#2b3142;white-space:nowrap;">Untouched Records</div>
<div style="position:absolute;left:558.5px;top:566.5400000000001px;width:29.5px;height:29.5px;box-sizing:border-box;border:3px solid #c4c2d5;border-radius:6px;background:#fff"></div>
<div style="position:absolute;left:603.5px;top:566.62px;font-size:29.2px;line-height:29.2px;font-weight:400;color:#2b3142;white-space:nowrap;">Record Action</div>
<div style="position:absolute;left:558.5px;top:626.5600000000001px;width:29.5px;height:29.5px;box-sizing:border-box;border:3px solid #c4c2d5;border-radius:6px;background:#fff"></div>
<div style="position:absolute;left:603.5px;top:626.64px;font-size:29.2px;line-height:29.2px;font-weight:400;color:#2b3142;white-space:nowrap;">Related Records Action</div>
<div style="position:absolute;left:558.5px;top:686.58px;width:29.5px;height:29.5px;box-sizing:border-box;border:3px solid #c4c2d5;border-radius:6px;background:#fff"></div>
<div style="position:absolute;left:603.5px;top:686.66px;font-size:29.2px;line-height:29.2px;font-weight:400;color:#2b3142;white-space:nowrap;">Locked</div>
<div style="position:absolute;left:558.5px;top:746.6000000000001px;width:29.5px;height:29.5px;box-sizing:border-box;border:3px solid #c4c2d5;border-radius:6px;background:#fff"></div>
<div style="position:absolute;left:603.5px;top:746.68px;font-size:29.2px;line-height:29.2px;font-weight:400;color:#2b3142;white-space:nowrap;">Latest Email Status</div>
<div style="position:absolute;left:558.5px;top:806.6200000000001px;width:29.5px;height:29.5px;box-sizing:border-box;border:3px solid #c4c2d5;border-radius:6px;background:#fff"></div>
<div style="position:absolute;left:603.5px;top:806.70px;font-size:29.2px;line-height:29.2px;font-weight:400;color:#2b3142;white-space:nowrap;">Activities</div>
<div style="position:absolute;left:558.5px;top:866.6400000000001px;width:29.5px;height:29.5px;box-sizing:border-box;border:3px solid #c4c2d5;border-radius:6px;background:#fff"></div>
<div style="position:absolute;left:603.5px;top:866.72px;font-size:29.2px;line-height:29.2px;font-weight:400;color:#2b3142;white-space:nowrap;">Notes</div>
<div style="position:absolute;left:558.5px;top:926.6600000000001px;width:29.5px;height:29.5px;box-sizing:border-box;border:3px solid #c4c2d5;border-radius:6px;background:#fff"></div>
<div style="position:absolute;left:603.5px;top:926.74px;font-size:29.2px;line-height:29.2px;font-weight:400;color:#2b3142;white-space:nowrap;">Deals</div>
<div style="position:absolute;left:558.5px;top:986.6800000000001px;width:29.5px;height:29.5px;box-sizing:border-box;border:3px solid #c4c2d5;border-radius:6px;background:#fff"></div>
<div style="position:absolute;left:603.5px;top:986.76px;font-size:29.2px;line-height:29.2px;font-weight:400;color:#2b3142;white-space:nowrap;">Deal Amount</div>
<div style="position:absolute;left:558.5px;top:1046.7px;width:29.5px;height:29.5px;box-sizing:border-box;border:3px solid #c4c2d5;border-radius:6px;background:#fff"></div>
<div style="position:absolute;left:603.5px;top:1046.78px;font-size:29.2px;line-height:29.2px;font-weight:400;color:#2b3142;white-space:nowrap;">Deal Stage</div>
<div style="position:absolute;left:558.5px;top:1106.72px;width:29.5px;height:29.5px;box-sizing:border-box;border:3px solid #c4c2d5;border-radius:6px;background:#fff"></div>
<div style="position:absolute;left:603.5px;top:1106.80px;font-size:29.2px;line-height:29.2px;font-weight:400;color:#2b3142;white-space:nowrap;">Deal Owner</div>
<div style="position:absolute;left:558.5px;top:1166.74px;width:29.5px;height:29.5px;box-sizing:border-box;border:3px solid #c4c2d5;border-radius:6px;background:#fff"></div>
<div style="position:absolute;left:603.5px;top:1166.82px;font-size:29.2px;line-height:29.2px;font-weight:400;color:#2b3142;white-space:nowrap;">Deal Closing Date</div>
<div style="position:absolute;left:558.5px;top:1226.76px;width:29.5px;height:29.5px;box-sizing:border-box;border:3px solid #c4c2d5;border-radius:6px;background:#fff"></div>
<div style="position:absolute;left:603.5px;top:1226.84px;font-size:29.2px;line-height:29.2px;font-weight:400;color:#2b3142;white-space:nowrap;">Campaigns</div>
<div style="position:absolute;left:558.5px;top:1286.7800000000002px;width:29.5px;height:29.5px;box-sizing:border-box;border:3px solid #c4c2d5;border-radius:6px;background:#fff"></div>
<div style="position:absolute;left:603.5px;top:1286.86px;font-size:29.2px;line-height:29.2px;font-weight:400;color:#2b3142;white-space:nowrap;">Cadences</div>
<svg style="position:absolute;left:0px;top:0px;overflow:visible;pointer-events:none;" width="2894" height="1524" viewBox="0 0 2894 1524"><path d="M559.00 1381.70 L573.50 1381.70 L566.25 1388.60 Z" fill="#1c1e26" stroke="#1c1e26" stroke-width="2.4" stroke-linejoin="round"/></svg>
<div style="position:absolute;left:591.5px;top:1368.77px;font-size:29.8px;line-height:29.8px;font-weight:700;color:#1c1e26;white-space:nowrap;letter-spacing:-0.35px;">Filter By Fields</div>
<div style="position:absolute;left:558.5px;top:1432.5px;width:29.5px;height:29.5px;box-sizing:border-box;border:3px solid #c4c2d5;border-radius:6px;background:#fff"></div>
<div style="position:absolute;left:603.5px;top:1433.28px;font-size:29.2px;line-height:29.2px;font-weight:400;color:#2b3142;white-space:nowrap;">Account Name</div>
<div style="position:absolute;left:1153px;top:197px;width:1760px;height:1292px;box-sizing:border-box;background:#fff;border:1.6px solid #dcd9ec;border-radius:20px;overflow:hidden"><div style="position:absolute;left:2px;top:1275px;width:1760px;height:16px;background:#ececec"></div><div style="position:absolute;left:2px;top:1275px;width:1105px;height:16px;background:#999;border-radius:0 8px 8px 0"></div></div>
<div style="position:absolute;left:1244.5px;top:220px;width:29.5px;height:29.5px;box-sizing:border-box;border:3px solid #c4c2d5;border-radius:6px;background:#fff"></div>
<div style="position:absolute;left:1386px;top:220.92px;font-size:28.8px;line-height:28.8px;font-weight:400;color:#1f2330;white-space:nowrap;">Contact Name</div>
<div style="position:absolute;left:1607px;top:222.98px;font-size:22px;line-height:22px;font-weight:700;color:#2b3142;white-space:nowrap;">All</div>
<svg style="position:absolute;left:0px;top:0px;overflow:visible;pointer-events:none;" width="2894" height="1524" viewBox="0 0 2894 1524"><path d="M1645.50 233.70 L1658.50 233.70 L1652.00 238.10 Z" fill="#2b3142" stroke="#2b3142" stroke-width="2.4" stroke-linejoin="round"/></svg>
<svg style="position:absolute;left:0px;top:0px;overflow:visible;pointer-events:none;" width="2894" height="1524" viewBox="0 0 2894 1524"><path d="M1717 227 H1741 M1717 234.7 H1741 M1717 242.4 H1741" stroke="#2b3142" stroke-width="2.8"/></svg>
<div style="position:absolute;left:1764.3px;top:210px;width:1.6px;height:49.5px;background:#d9d7ea"></div>
<div style="position:absolute;left:1786px;top:220.92px;font-size:28.8px;line-height:28.8px;font-weight:400;color:#1f2330;white-space:nowrap;">First Name</div>
<svg style="position:absolute;left:0px;top:0px;overflow:visible;pointer-events:none;" width="2894" height="1524" viewBox="0 0 2894 1524"><path d="M2117 227 H2141 M2117 234.7 H2141 M2117 242.4 H2141" stroke="#2b3142" stroke-width="2.8"/></svg>
<div style="position:absolute;left:2164.3px;top:210px;width:1.6px;height:49.5px;background:#d9d7ea"></div>
<div style="position:absolute;left:2186px;top:220.92px;font-size:28.8px;line-height:28.8px;font-weight:400;color:#1f2330;white-space:nowrap;">Last Name</div>
<div style="position:absolute;left:2356px;top:222.98px;font-size:22px;line-height:22px;font-weight:700;color:#2b3142;white-space:nowrap;">All</div>
<svg style="position:absolute;left:0px;top:0px;overflow:visible;pointer-events:none;" width="2894" height="1524" viewBox="0 0 2894 1524"><path d="M2393.50 233.70 L2406.50 233.70 L2400.00 238.10 Z" fill="#2b3142" stroke="#2b3142" stroke-width="2.4" stroke-linejoin="round"/></svg>
<svg style="position:absolute;left:0px;top:0px;overflow:visible;pointer-events:none;" width="2894" height="1524" viewBox="0 0 2894 1524"><path d="M2517 227 H2541 M2517 234.7 H2541 M2517 242.4 H2541" stroke="#2b3142" stroke-width="2.8"/></svg>
<div style="position:absolute;left:2564.3px;top:210px;width:1.6px;height:49.5px;background:#d9d7ea"></div>
<div style="position:absolute;left:2586.5px;top:220.92px;font-size:28.8px;line-height:28.8px;font-weight:400;color:#1f2330;white-space:nowrap;">Email</div>
<div style="position:absolute;left:2806px;top:198px;width:1.6px;height:72px;background:#dcd9ec"></div>
<svg style="position:absolute;left:0px;top:0px;overflow:visible;pointer-events:none;" width="2894" height="1524" viewBox="0 0 2894 1524"><g stroke="#2b3142" stroke-width="3.4" stroke-linecap="round"><path d="M2834.6 225.9 H2845.4 M2856 225.9 H2863.5 M2834.6 241.9 H2842 M2852.7 241.9 H2863.5"/></g><g fill="#2b3142"><circle cx="2855.9" cy="225.9" r="3.9"/><circle cx="2841.9" cy="241.9" r="3.9"/></g></svg>
<div style="position:absolute;left:1154.6px;top:268px;width:1731px;height:4px;background:#dcdaee"></div>
<div style="position:absolute;left:1244.5px;top:296.3px;width:29.5px;height:29.5px;box-sizing:border-box;border:3px solid #c4c2d5;border-radius:6px;background:#fff"></div>
<div style="position:absolute;left:1386px;top:293.52px;font-size:28.8px;line-height:28.8px;font-weight:400;color:#2b3142;white-space:nowrap;">Anthony Jones</div>
<div style="position:absolute;left:1786px;top:293.52px;font-size:28.8px;line-height:28.8px;font-weight:400;color:#2b3142;white-space:nowrap;">Anthony</div>
<div style="position:absolute;left:2186px;top:293.52px;font-size:28.8px;line-height:28.8px;font-weight:400;color:#2b3142;white-space:nowrap;">Jones</div>
<div style="position:absolute;left:1154.6px;top:379.7px;width:1730px;height:1.6px;background:#e7e7f1"></div>
<div style="position:absolute;left:1244.5px;top:406.33000000000004px;width:29.5px;height:29.5px;box-sizing:border-box;border:3px solid #c4c2d5;border-radius:6px;background:#fff"></div>
<div style="position:absolute;left:1386px;top:403.55px;font-size:28.8px;line-height:28.8px;font-weight:400;color:#2b3142;white-space:nowrap;">James Cannon</div>
<div style="position:absolute;left:1786px;top:403.55px;font-size:28.8px;line-height:28.8px;font-weight:400;color:#2b3142;white-space:nowrap;">James</div>
<div style="position:absolute;left:2186px;top:403.55px;font-size:28.8px;line-height:28.8px;font-weight:400;color:#2b3142;white-space:nowrap;">Cannon</div>
<div style="position:absolute;left:1154.6px;top:489.73px;width:1730px;height:1.6px;background:#e7e7f1"></div>
<div style="position:absolute;left:1244.5px;top:516.36px;width:29.5px;height:29.5px;box-sizing:border-box;border:3px solid #c4c2d5;border-radius:6px;background:#fff"></div>
<div style="position:absolute;left:1386px;top:513.58px;font-size:28.8px;line-height:28.8px;font-weight:400;color:#2b3142;white-space:nowrap;">Shelly Hardin</div>
<div style="position:absolute;left:1786px;top:513.58px;font-size:28.8px;line-height:28.8px;font-weight:400;color:#2b3142;white-space:nowrap;">Shelly</div>
<div style="position:absolute;left:2186px;top:513.58px;font-size:28.8px;line-height:28.8px;font-weight:400;color:#2b3142;white-space:nowrap;">Hardin</div>
<div style="position:absolute;left:1154.6px;top:599.76px;width:1730px;height:1.6px;background:#e7e7f1"></div>
<div style="position:absolute;left:1244.5px;top:626.3900000000001px;width:29.5px;height:29.5px;box-sizing:border-box;border:3px solid #c4c2d5;border-radius:6px;background:#fff"></div>
<div style="position:absolute;left:1386px;top:623.61px;font-size:28.8px;line-height:28.8px;font-weight:400;color:#2b3142;white-space:nowrap;">Amber Phillips</div>
<div style="position:absolute;left:1786px;top:623.61px;font-size:28.8px;line-height:28.8px;font-weight:400;color:#2b3142;white-space:nowrap;">Amber</div>
<div style="position:absolute;left:2186px;top:623.61px;font-size:28.8px;line-height:28.8px;font-weight:400;color:#2b3142;white-space:nowrap;">Phillips</div>
<div style="position:absolute;left:1154.6px;top:709.79px;width:1730px;height:1.6px;background:#e7e7f1"></div>
<div style="position:absolute;left:1244.5px;top:736.4200000000001px;width:29.5px;height:29.5px;box-sizing:border-box;border:3px solid #c4c2d5;border-radius:6px;background:#fff"></div>
<div style="position:absolute;left:1386px;top:733.64px;font-size:28.8px;line-height:28.8px;font-weight:400;color:#2b3142;white-space:nowrap;">Jennifer Flores</div>
<div style="position:absolute;left:1786px;top:733.64px;font-size:28.8px;line-height:28.8px;font-weight:400;color:#2b3142;white-space:nowrap;">Jennifer</div>
<div style="position:absolute;left:2186px;top:733.64px;font-size:28.8px;line-height:28.8px;font-weight:400;color:#2b3142;white-space:nowrap;">Flores</div>
<div style="position:absolute;left:1154.6px;top:819.8199999999999px;width:1730px;height:1.6px;background:#e7e7f1"></div>
<div style="position:absolute;left:1244.5px;top:846.45px;width:29.5px;height:29.5px;box-sizing:border-box;border:3px solid #c4c2d5;border-radius:6px;background:#fff"></div>
<div style="position:absolute;left:1386px;top:843.67px;font-size:28.8px;line-height:28.8px;font-weight:400;color:#2b3142;white-space:nowrap;">Daniel Sanders</div>
<div style="position:absolute;left:1786px;top:843.67px;font-size:28.8px;line-height:28.8px;font-weight:400;color:#2b3142;white-space:nowrap;">Daniel</div>
<div style="position:absolute;left:2186px;top:843.67px;font-size:28.8px;line-height:28.8px;font-weight:400;color:#2b3142;white-space:nowrap;">Sanders</div>
<div style="position:absolute;left:1154.6px;top:929.8499999999999px;width:1730px;height:1.6px;background:#e7e7f1"></div>
<div style="position:absolute;left:1244.5px;top:956.48px;width:29.5px;height:29.5px;box-sizing:border-box;border:3px solid #c4c2d5;border-radius:6px;background:#fff"></div>
<div style="position:absolute;left:1386px;top:953.70px;font-size:28.8px;line-height:28.8px;font-weight:400;color:#2b3142;white-space:nowrap;">William Everett</div>
<div style="position:absolute;left:1786px;top:953.70px;font-size:28.8px;line-height:28.8px;font-weight:400;color:#2b3142;white-space:nowrap;">William</div>
<div style="position:absolute;left:2186px;top:953.70px;font-size:28.8px;line-height:28.8px;font-weight:400;color:#2b3142;white-space:nowrap;">Everett</div>
<div style="position:absolute;left:1154.6px;top:1039.88px;width:1730px;height:1.6px;background:#e7e7f1"></div>
<div style="position:absolute;left:1244.5px;top:1066.51px;width:29.5px;height:29.5px;box-sizing:border-box;border:3px solid #c4c2d5;border-radius:6px;background:#fff"></div>
<div style="position:absolute;left:1386px;top:1063.73px;font-size:28.8px;line-height:28.8px;font-weight:400;color:#2b3142;white-space:nowrap;">Kristen Moore</div>
<div style="position:absolute;left:1786px;top:1063.73px;font-size:28.8px;line-height:28.8px;font-weight:400;color:#2b3142;white-space:nowrap;">Kristen</div>
<div style="position:absolute;left:2186px;top:1063.73px;font-size:28.8px;line-height:28.8px;font-weight:400;color:#2b3142;white-space:nowrap;">Moore</div>
<div style="position:absolute;left:1154.6px;top:1149.91px;width:1730px;height:1.6px;background:#e7e7f1"></div>
<div style="position:absolute;left:1244.5px;top:1176.54px;width:29.5px;height:29.5px;box-sizing:border-box;border:3px solid #c4c2d5;border-radius:6px;background:#fff"></div>
<div style="position:absolute;left:1386px;top:1173.76px;font-size:28.8px;line-height:28.8px;font-weight:400;color:#2b3142;white-space:nowrap;">Patricia Collins</div>
<div style="position:absolute;left:1786px;top:1173.76px;font-size:28.8px;line-height:28.8px;font-weight:400;color:#2b3142;white-space:nowrap;">Patricia</div>
<div style="position:absolute;left:2186px;top:1173.76px;font-size:28.8px;line-height:28.8px;font-weight:400;color:#2b3142;white-space:nowrap;">Collins</div>
<div style="position:absolute;left:1154.6px;top:1259.94px;width:1730px;height:1.6px;background:#e7e7f1"></div>
<div style="position:absolute;left:1244.5px;top:1286.57px;width:29.5px;height:29.5px;box-sizing:border-box;border:3px solid #c4c2d5;border-radius:6px;background:#fff"></div>
<div style="position:absolute;left:1386px;top:1283.79px;font-size:28.8px;line-height:28.8px;font-weight:400;color:#2b3142;white-space:nowrap;">Justin Salazar</div>
<div style="position:absolute;left:1786px;top:1283.79px;font-size:28.8px;line-height:28.8px;font-weight:400;color:#2b3142;white-space:nowrap;">Justin</div>
<div style="position:absolute;left:2186px;top:1283.79px;font-size:28.8px;line-height:28.8px;font-weight:400;color:#2b3142;white-space:nowrap;">Salazar</div>
<div style="position:absolute;left:1154.6px;top:1369.97px;width:1730px;height:1.6px;background:#e7e7f1"></div>
<div style="position:absolute;left:2580px;top:288px;width:302px;height:1059px;background:#fcfcfc;overflow:hidden"><div style="position:absolute;right:-10px;top:0;width:24px;height:1059px;background:#e9e9e9;filter:blur(8px);opacity:0.6"></div><div style="position:absolute;left:-10px;top:-10px;width:330px;height:14px;background:#e9e9e9;filter:blur(8px);opacity:0.6"></div><div style="position:absolute;left:12px;top:12.0px;width:300px;height:26px;background:#d9d9d9;filter:blur(12px);opacity:0.85"></div><div style="position:absolute;left:200px;top:16.0px;width:60px;height:20px;background:#d4d4d4;filter:blur(12px);opacity:0.5"></div><div style="position:absolute;left:16px;top:40.0px;width:40px;height:18px;background:#e0e0e0;filter:blur(10px);opacity:0.8"></div><div style="position:absolute;left:12px;top:122.0px;width:300px;height:26px;background:#d9d9d9;filter:blur(12px);opacity:0.85"></div><div style="position:absolute;left:200px;top:126.0px;width:60px;height:20px;background:#d4d4d4;filter:blur(12px);opacity:0.5"></div><div style="position:absolute;left:16px;top:150.0px;width:40px;height:18px;background:#e0e0e0;filter:blur(10px);opacity:0.8"></div><div style="position:absolute;left:12px;top:232.1px;width:300px;height:26px;background:#d9d9d9;filter:blur(12px);opacity:0.85"></div><div style="position:absolute;left:200px;top:236.1px;width:60px;height:20px;background:#d4d4d4;filter:blur(12px);opacity:0.5"></div><div style="position:absolute;left:16px;top:260.1px;width:40px;height:18px;background:#e0e0e0;filter:blur(10px);opacity:0.8"></div><div style="position:absolute;left:12px;top:342.1px;width:300px;height:26px;background:#d9d9d9;filter:blur(12px);opacity:0.85"></div><div style="position:absolute;left:200px;top:346.1px;width:60px;height:20px;background:#d4d4d4;filter:blur(12px);opacity:0.5"></div><div style="position:absolute;left:16px;top:370.1px;width:40px;height:18px;background:#e0e0e0;filter:blur(10px);opacity:0.8"></div><div style="position:absolute;left:12px;top:452.1px;width:300px;height:26px;background:#d9d9d9;filter:blur(12px);opacity:0.85"></div><div style="position:absolute;left:200px;top:456.1px;width:60px;height:20px;background:#d4d4d4;filter:blur(12px);opacity:0.5"></div><div style="position:absolute;left:16px;top:480.1px;width:40px;height:18px;background:#e0e0e0;filter:blur(10px);opacity:0.8"></div><div style="position:absolute;left:12px;top:562.1px;width:300px;height:26px;background:#d9d9d9;filter:blur(12px);opacity:0.85"></div><div style="position:absolute;left:200px;top:566.1px;width:60px;height:20px;background:#d4d4d4;filter:blur(12px);opacity:0.5"></div><div style="position:absolute;left:16px;top:590.1px;width:40px;height:18px;background:#e0e0e0;filter:blur(10px);opacity:0.8"></div><div style="position:absolute;left:12px;top:672.2px;width:300px;height:26px;background:#d9d9d9;filter:blur(12px);opacity:0.85"></div><div style="position:absolute;left:200px;top:676.2px;width:60px;height:20px;background:#d4d4d4;filter:blur(12px);opacity:0.5"></div><div style="position:absolute;left:16px;top:700.2px;width:40px;height:18px;background:#e0e0e0;filter:blur(10px);opacity:0.8"></div><div style="position:absolute;left:12px;top:782.2px;width:300px;height:26px;background:#d9d9d9;filter:blur(12px);opacity:0.85"></div><div style="position:absolute;left:200px;top:786.2px;width:60px;height:20px;background:#d4d4d4;filter:blur(12px);opacity:0.5"></div><div style="position:absolute;left:16px;top:810.2px;width:40px;height:18px;background:#e0e0e0;filter:blur(10px);opacity:0.8"></div><div style="position:absolute;left:12px;top:892.2px;width:300px;height:26px;background:#d9d9d9;filter:blur(12px);opacity:0.85"></div><div style="position:absolute;left:200px;top:896.2px;width:60px;height:20px;background:#d4d4d4;filter:blur(12px);opacity:0.5"></div><div style="position:absolute;left:16px;top:920.2px;width:40px;height:18px;background:#e0e0e0;filter:blur(10px);opacity:0.8"></div><div style="position:absolute;left:12px;top:1002.3px;width:300px;height:26px;background:#d9d9d9;filter:blur(12px);opacity:0.85"></div><div style="position:absolute;left:200px;top:1006.3px;width:60px;height:20px;background:#d4d4d4;filter:blur(12px);opacity:0.5"></div><div style="position:absolute;left:16px;top:1030.3px;width:40px;height:18px;background:#e0e0e0;filter:blur(10px);opacity:0.8"></div></div>
<div style="position:absolute;left:2882px;top:300px;width:3px;height:22px;background:#2b3142;opacity:0.7"></div>
<div style="position:absolute;left:2882px;top:414px;width:3px;height:14px;background:#2b3142;opacity:0.7"></div>
<div style="position:absolute;left:2882px;top:522px;width:3px;height:16px;background:#2b3142;opacity:0.7"></div>
<div style="position:absolute;left:2882px;top:634px;width:3px;height:14px;background:#2b3142;opacity:0.7"></div>
<div style="position:absolute;left:2882px;top:742px;width:3px;height:16px;background:#2b3142;opacity:0.7"></div>
<div style="position:absolute;left:2882px;top:852px;width:3px;height:14px;background:#2b3142;opacity:0.7"></div>
<div style="position:absolute;left:2882px;top:962px;width:3px;height:16px;background:#2b3142;opacity:0.7"></div>
<div style="position:absolute;left:2882px;top:1070px;width:3px;height:22px;background:#2b3142;opacity:0.7"></div>
<div style="position:absolute;left:2882px;top:1184px;width:3px;height:14px;background:#2b3142;opacity:0.7"></div>
<div style="position:absolute;left:2882px;top:1292px;width:3px;height:14px;background:#2b3142;opacity:0.7"></div>
<div style="position:absolute;left:2885px;top:0px;width:9px;height:1524px;background:#000"></div>
<div style="position:absolute;left:0px;top:1515px;width:2894px;height:9px;background:#000"></div>
<div style="position:absolute;left:0px;top:0px;width:2894px;height:8px;background:#000"></div>
<div style="position:absolute;left:0px;top:0px;width:8px;height:1524px;background:#000"></div>
<div style="position:absolute;left:362px;top:4px;width:170px;height:100px;box-sizing:border-box;border:10px solid #fa5a4b;filter:drop-shadow(1px 5px 3px rgba(0,0,0,0.5));"></div>
<div style="position:absolute;left:4px;top:564px;width:90px;height:82px;box-sizing:border-box;border:10px solid #fa5a4b;filter:drop-shadow(1px 5px 3px rgba(0,0,0,0.5));"></div>
<svg style="position:absolute;left:0px;top:0px;overflow:visible;pointer-events:none;filter:drop-shadow(1px 5px 3px rgba(0,0,0,0.5));" width="2894" height="1524" viewBox="0 0 2894 1524"><g fill="#fa5a4b" stroke="#fa5a4b" stroke-linecap="round" stroke-linejoin="round"><path d="M522 99.5 L1015 128.5" stroke-width="9.5"/><path d="M1030 129.5 L998.5 111.5 L1010 129 L998.5 142.5 Z" stroke-width="5"/><path d="M86 639 L675 908" stroke-width="9.5"/><path d="M687.3 915.2 L665.5 888 L668.8 901 L652.5 916 Z" stroke-width="5"/></g></svg>
<div style="position:absolute;left:1046px;top:96.02px;font-size:64px;line-height:64px;font-weight:700;color:#fa5a4b;white-space:nowrap;font-style:italic;transform:scaleX(0.91);transform-origin:0 0;text-shadow:1px 2px 4px rgba(0,0,0,0.32);">Create option</div>
<div style="position:absolute;left:703px;top:880.92px;font-size:64px;line-height:64px;font-weight:700;color:#fa5a4b;white-space:nowrap;font-style:italic;transform:scaleX(0.91);transform-origin:0 0;text-shadow:1px 2px 4px rgba(0,0,0,0.32);">Search Option</div>
</body></html>
